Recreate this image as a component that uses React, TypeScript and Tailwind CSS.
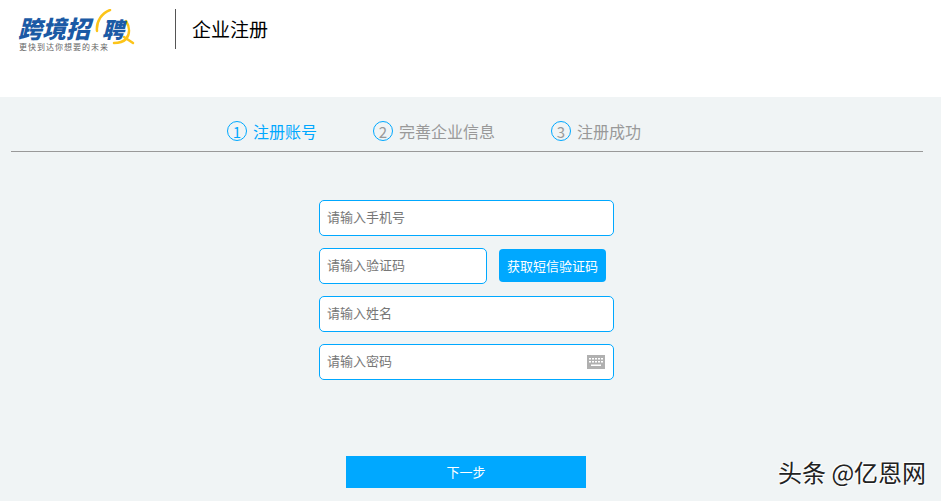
import React from 'react';

const font = { fontFamily: '"Noto Sans CJK SC", "Noto Sans", sans-serif' };

const Step: React.FC<{ n: string; label: string; active?: boolean; className?: string }> = ({ n, label, active, className }) => (
  <div className={`flex items-center gap-[6px] ${className ?? ''}`}>
    <span className="flex h-5 w-5 items-center justify-center rounded-full border border-[#00a8ff] text-[15px] leading-none">
      <span className={active ? 'text-[#00a8ff]' : 'text-[#999]'}>{n}</span>
    </span>
    <span className={`text-[16px] leading-[20px] ${active ? 'text-[#00a8ff]' : 'text-[#999]'}`}>{label}</span>
  </div>
);

const Field: React.FC<{ placeholder: string; className?: string; children?: React.ReactNode }> = ({ placeholder, className, children }) => (
  <div className={`flex h-9 items-center rounded-[5px] border border-[#00a8ff] bg-white pl-[7px] pr-2 ${className ?? ''}`}>
    <input
      placeholder={placeholder}
      className="min-w-0 flex-1 -translate-y-px bg-transparent text-[13px] text-[#333] outline-none placeholder:text-[#777]"
    />
    {children}
  </div>
);

const KeyboardIcon = () => (
  <svg width="18" height="14" viewBox="0 0 18 14" className="shrink-0">
    <rect width="18" height="14" fill="#b0b0b0" />
    <g fill="#fff">
      <rect x="2" y="3" width="2" height="1.5" />
      <rect x="5" y="3" width="2" height="1.5" />
      <rect x="8" y="3" width="2" height="1.5" />
      <rect x="11" y="3" width="2" height="1.5" />
      <rect x="14" y="3" width="2" height="1.5" />
      <rect x="2" y="6" width="2" height="1.5" />
      <rect x="5" y="6" width="2" height="1.5" />
      <rect x="8" y="6" width="2" height="1.5" />
      <rect x="11" y="6" width="2" height="1.5" />
      <rect x="14" y="6" width="2" height="1.5" />
      <rect x="4" y="9.5" width="10" height="1.5" />
    </g>
  </svg>
);

const Logo = () => (
  <div className="relative h-[46px] w-[118px] shrink-0">
    <svg width="118" height="46" viewBox="0 0 118 46" className="absolute left-0 top-0">
      <g fill="none" stroke="#fcc419" strokeWidth="2.5" strokeLinecap="round">
        <path d="M79 22 C78 12 84 4 92 1" />
        <path d="M108 12 C112 18 112 25 108 30 C105 33 100 34 96 34" />
        <path d="M106 28 L115 34" />
      </g>
    </svg>
    <span className="absolute left-0 top-[6px] whitespace-nowrap text-[24px] font-black italic leading-[26px] text-[#1b5aa5]">
      跨境招
    </span>
    <span className="absolute left-[84px] top-[6px] whitespace-nowrap text-[22px] font-black italic leading-[26px] text-[#1b5aa5]">
      聘
    </span>
    <span className="absolute left-[1px] top-[33px] whitespace-nowrap text-[8px] leading-[9px] tracking-[1px] text-[#666]">
      更快到达你想要的未来
    </span>
  </div>
);

export default function App() {
  return (
    <div className="relative flex h-[501px] w-[941px] flex-col overflow-hidden bg-[#f0f4f5]" style={font}>
      {/* Header */}
      <div className="flex h-[97px] items-start bg-white pl-[18px] pt-[9px]">
        <Logo />
        <div className="ml-[39px] h-10 w-px bg-[#555]" />
        <h1 className="ml-4 mt-[7px] text-[19px] font-normal leading-[26px] text-black">企业注册</h1>
      </div>

      {/* Steps */}
      <div className="mx-[11px] flex h-[55px] w-[912px] items-center border-b border-[#999] pl-[216px] pt-[14px]">
        <Step n="1" label="注册账号" active />
        <Step n="2" label="完善企业信息" className="ml-[56px]" />
        <Step n="3" label="注册成功" className="ml-[56px]" />
      </div>

      {/* Form */}
      <div className="ml-[319px] mt-[48px] flex w-[295px] flex-col gap-3">
        <Field placeholder="请输入手机号" />
        <div className="flex items-start gap-3">
          <Field placeholder="请输入验证码" className="w-[168px]" />
          <button className="mt-px h-[33px] w-[107px] rounded-[4px] bg-[#00a8ff] text-[13px] text-white">获取短信验证码</button>
        </div>
        <Field placeholder="请输入姓名" />
        <Field placeholder="请输入密码">
          <KeyboardIcon />
        </Field>
      </div>

      <button className="ml-[346px] mt-[76px] h-8 w-[240px] bg-[#00a8ff] text-[13px] text-white">下一步</button>

      {/* Watermark */}
      <div className="absolute left-[778px] top-[456px] whitespace-pre text-[24px] leading-[32px] text-[#222] [text-shadow:1px_1px_1px_#fff,-1px_-1px_1px_#fff]">
        头条 @亿恩网
      </div>
    </div>
  );
}
